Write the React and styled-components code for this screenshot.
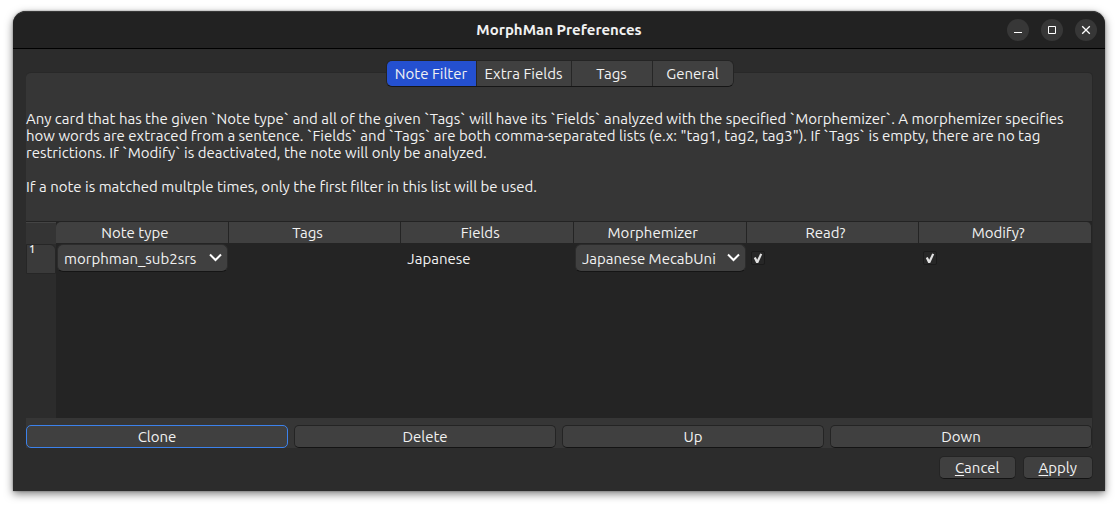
import React, { useState } from "react";
import styled, { createGlobalStyle, css } from "styled-components";

const GlobalStyle = createGlobalStyle`
  *, *::before, *::after { box-sizing: border-box; }
  body {
    margin: 0;
    background: #fff;
    color: #f2f2f2;
    font: 15px/17px "Ubuntu", "Noto Sans", sans-serif;
  }
  button, select, input { font: inherit; color: inherit; margin: 0; }
`;

const Desktop = styled.div`
  display: flex;
  min-height: 100vh;
  padding: 11px 13px 16px;
`;

const Window = styled.main`
  flex: 1;
  min-width: 0;
  display: flex;
  flex-direction: column;
  background: #2c2c2c;
  border-radius: 13px 13px 0 0;
  box-shadow: 0 3px 9px rgba(0, 0, 0, 0.5), 0 0 2px rgba(0, 0, 0, 0.4);
`;

const TitleBar = styled.header`
  display: grid;
  grid-template-columns: 1fr auto 1fr;
  align-items: center;
  height: 38px;
  padding: 0 8px;
  background: #222;
  border-top: 1px solid #383838;
  border-bottom: 1px solid #000;
  border-radius: 13px 13px 0 0;
`;

const Title = styled.h1`
  grid-column: 2;
  margin: 0;
  padding-bottom: 2px;
  font-size: 15px;
  font-weight: 600;
`;

const WindowControls = styled.div`
  display: flex;
  justify-content: flex-end;
  gap: 12px;
`;

const ControlButton = styled.button`
  display: grid;
  place-items: center;
  width: 22px;
  height: 22px;
  padding: 0;
  border: 0;
  border-radius: 50%;
  background: #373737;
`;

const Content = styled.div`
  flex: 1;
  display: flex;
  flex-direction: column;
  padding: 11px 12px 12px 13px;
`;

const TabList = styled.div`
  position: relative;
  z-index: 1;
  align-self: center;
  display: flex;
  margin-bottom: -15px;
  border: 1px solid #242424;
  border-bottom-color: #161616;
  border-radius: 6px;
  overflow: hidden;
`;

const Tab = styled.button`
  width: ${(p) => p.$width}px;
  height: 25px;
  padding: 0;
  border: 0;
  white-space: nowrap;
  background: ${(p) => (p.$active ? "#2450d0" : "#404040")};
  & + & { border-left: 1px solid #262626; }
`;

const Panel = styled.section`
  flex: 1;
  display: flex;
  flex-direction: column;
  padding-top: 37px;
  background: #363636;
  border: 1px solid #282828;
  border-width: 1px 1px 0 0;
  border-radius: 5px 5px 0 0;
`;

const Description = styled.p`
  margin: 0 0 17px;
  white-space: pre-line;
`;

const TableArea = styled.div`
  flex: 1;
  margin-top: 9px;
  border-top: 1px solid #232323;
  background: linear-gradient(to right, #2c2c2c 30px, #242424 30px);
`;

const FilterTable = styled.table`
  width: 100%;
  table-layout: fixed;
  border-collapse: separate;
  border-spacing: 0;
`;

const IndexCol = styled.col`
  width: 30px;
`;

const HeadCell = styled.th`
  height: 22px;
  padding: 0 14px 0 0;
  font-weight: 400;
  background: #404040;
  border-right: 1px solid #242424;
  border-bottom: 1px solid #242424;
  &:nth-child(2) { border-top-left-radius: 5px; }
  &:last-child { border-top-right-radius: 5px; }
`;

const Corner = styled.td`
  padding: 0;
  background: #343434;
  border-top: 1px solid #444;
`;

const RowHead = styled.th`
  height: 30px;
  padding: 0 2px;
  vertical-align: top;
  text-align: left;
  font-size: 11px;
  line-height: 9px;
  font-weight: 500;
  background: #3a3a3a;
  border: 1px solid #262626;
  border-top-right-radius: 6px;
`;

const Cell = styled.td`
  height: 30px;
  padding: 0 ${(p) => (p.$text ? 6 : 1)}px 2px;
`;

const SelectBox = styled.div`
  position: relative;
  svg {
    position: absolute;
    right: 6px;
    top: 9px;
    pointer-events: none;
  }
`;

const Select = styled.select`
  display: block;
  appearance: none;
  width: 100%;
  height: 28px;
  padding: 0 24px 0 6px;
  border: 1px solid #2c2c2c;
  border-bottom-color: #151515;
  border-radius: 6px;
  background: #404040;
  text-overflow: clip;
`;

const CheckBox = styled.label`
  position: relative;
  display: block;
  width: 14px;
  height: 14px;
  margin-left: 3px;
  input {
    display: block;
    appearance: none;
    width: 14px;
    height: 14px;
    border: 1px solid #1b1b1b;
    border-radius: 2px;
    background: #272727;
  }
  svg {
    position: absolute;
    inset: 0;
    pointer-events: none;
    visibility: hidden;
  }
  input:checked + svg { visibility: visible; }
`;

const Actions = styled.div`
  display: grid;
  grid-template-columns: repeat(4, 1fr);
  gap: 6px;
  padding-top: 7px;
`;

const Button = styled.button`
  height: 23px;
  min-width: 70px;
  padding: 0 15px;
  line-height: 20px;
  border: 1px solid #242424;
  border-bottom-color: #141414;
  border-radius: 5px;
  background: #404040;
  ${(p) => p.$focused && css`border-color: #3c82ec;`}
`;

const Mnemonic = styled.span`
  text-decoration: underline;
  text-underline-offset: 2px;
`;

const DialogButtons = styled.footer`
  display: flex;
  justify-content: flex-end;
  gap: 7px;
  padding-top: 8px;
`;

const TABS = [
  ["Note Filter", 89],
  ["Extra Fields", 95],
  ["Tags", 81],
  ["General", 81],
];
const COLUMNS = ["Note type", "Tags", "Fields", "Morphemizer", "Read?", "Modify?"];
const ACTIONS = ["Clone", "Delete", "Up", "Down"];

const Dropdown = ({ label, value }) => (
  <SelectBox>
    <Select aria-label={label} defaultValue={value}>
      <option>{value}</option>
    </Select>
    <svg width="13" height="9" viewBox="0 0 13 9" fill="none" stroke="#fff" strokeWidth="2">
      <path d="M1 1.5 6.5 7 12 1.5" />
    </svg>
  </SelectBox>
);

const Check = ({ label }) => (
  <CheckBox>
    <input type="checkbox" aria-label={label} defaultChecked />
    <svg width="14" height="14" viewBox="0 0 14 14" fill="#e0e0e0">
      <path d="M2.8 7 4.8 6 6.2 8.8 9.2 2.6 11.2 3.2 7.2 12 5.2 12Z" />
    </svg>
  </CheckBox>
);

export default function App() {
  const [active, setActive] = useState("Note Filter");
  return (
    <Desktop>
      <GlobalStyle />
      <Window>
        <TitleBar>
          <Title>MorphMan Preferences</Title>
          <WindowControls>
            <ControlButton aria-label="Minimize">
              <svg width="10" height="10" viewBox="0 0 10 10"><path d="M1 7h8v1H1z" fill="#fff" /></svg>
            </ControlButton>
            <ControlButton aria-label="Maximize">
              <svg width="10" height="10" viewBox="0 0 10 10"><path d="M1.5 1.5h7v7h-7z" fill="none" stroke="#fff" /></svg>
            </ControlButton>
            <ControlButton aria-label="Close">
              <svg width="10" height="10" viewBox="0 0 10 10"><path d="M1.2 1.2l7.6 7.6M8.8 1.2l-7.6 7.6" stroke="#fff" strokeWidth="1.3" /></svg>
            </ControlButton>
          </WindowControls>
        </TitleBar>
        <Content>
          <TabList role="tablist">
            {TABS.map(([name, width]) => (
              <Tab
                key={name}
                role="tab"
                aria-selected={active === name}
                $active={active === name}
                $width={width}
                onClick={() => setActive(name)}
              >
                {name}
              </Tab>
            ))}
          </TabList>
          <Panel role="tabpanel">
            <Description>
              {'Any card that has the given `Note type` and all of the given `Tags` will have its `Fields` analyzed with the specified `Morphemizer`. A morphemizer specifies\nhow words are extraced from a sentence. `Fields` and `Tags` are both comma-separated lists (e.x: "tag1, tag2, tag3"). If `Tags` is empty, there are no tag\nrestrictions. If `Modify` is deactivated, the note will only be analyzed.'}
            </Description>
            <Description>
              If a note is matched multple times, only the first filter in this list will be used.
            </Description>
            <TableArea>
              <FilterTable>
                <colgroup>
                  <IndexCol />
                  {COLUMNS.map((c) => <col key={c} />)}
                </colgroup>
                <thead>
                  <tr>
                    <Corner />
                    {COLUMNS.map((c) => <HeadCell key={c} scope="col">{c}</HeadCell>)}
                  </tr>
                </thead>
                <tbody>
                  <tr>
                    <RowHead scope="row">1</RowHead>
                    <Cell><Dropdown label="Note type" value="morphman_sub2srs" /></Cell>
                    <Cell $text />
                    <Cell $text>Japanese</Cell>
                    <Cell><Dropdown label="Morphemizer" value="Japanese MecabUni" /></Cell>
                    <Cell><Check label="Read?" /></Cell>
                    <Cell><Check label="Modify?" /></Cell>
                  </tr>
                </tbody>
              </FilterTable>
            </TableArea>
            <Actions>
              {ACTIONS.map((a, i) => <Button key={a} $focused={i === 0}>{a}</Button>)}
            </Actions>
          </Panel>
          <DialogButtons>
            <Button><Mnemonic>C</Mnemonic>ancel</Button>
            <Button><Mnemonic>A</Mnemonic>pply</Button>
          </DialogButtons>
        </Content>
      </Window>
    </Desktop>
  );
}
